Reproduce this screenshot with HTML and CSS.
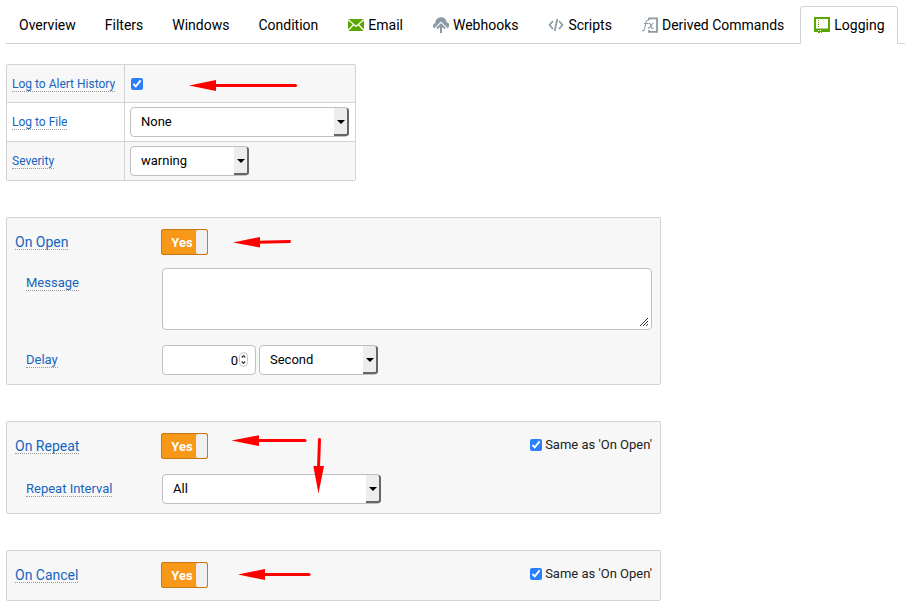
FILE: index.html
```
<!DOCTYPE html>
<html>

	<head>
		<meta charset="UTF-8">
		<title>Logging</title>
		<link rel="stylesheet" href="styles.css">
	</head>

	<body>
		<nav class="tabs">
			<a class="tab" href="#">Overview</a>
			<a class="tab" href="#">Filters</a>
			<a class="tab" href="#">Windows</a>
			<a class="tab" href="#">Condition</a>
			<a class="tab" href="#">
				<svg class="icon" width="18" height="16" viewBox="0 0 18 16"><path fill="#5aa700" d="M1 2h16v12H1z"/><path fill="none" stroke="#fff" stroke-width="1.3" d="M1 2.5l8 7 8-7M1 13.5l5.5-6M17 13.5l-5.5-6"/></svg>
				Email
			</a>
			<a class="tab" href="#">
				<svg class="icon" width="18" height="16" viewBox="0 0 18 16"><path fill="#8b9ba3" d="M2.500 11.500C.5 10.500.3 7 3.300 6 3.500 2.500 6 .3 9 .3s5.300 1.700 5.500 4.700c3 .7 3.500 4.500 1 6.500z"/><path fill="#fff" d="M9 4.500L2.500 11v2h13v-2z"/><path fill="none" stroke="#8b9ba3" stroke-width="2" d="M5 11.500L9 7.500l4 4M9 8v8"/></svg>
				Webhooks
			</a>
			<a class="tab" href="#">
				<svg class="icon" width="18" height="16" viewBox="0 0 18 16"><path fill="none" stroke="#8b9ba3" stroke-width="1.700" d="M6 4L2.500 8 6 12M12 4l3.500 4-3.500 4M10.300 2L7.700 14"/></svg>
				Scripts
			</a>
			<a class="tab" href="#">
				<svg class="icon" width="18" height="16" viewBox="0 0 18 16"><path fill="none" stroke="#8b9ba3" stroke-width="1.800" d="M8 3V1.300h8v13.500H8V13"/><path fill="none" stroke="#8b9ba3" stroke-width="1.100" d="M7.500 3.500c-1.500-.7-2.200.3-2.500 2L3.500 12c-.3 1.500-1 2-2.500 1.500M3 6.500h4M7.500 6.500c1.500-.5 2 .5 2.500 2.500s1 3 2.500 2.200M12.500 6.500c-1.500 0-2 1.200-2.700 2.500S8.500 11.500 7 11.300"/></svg>
				Derived Commands
			</a>
			<a class="tab active" href="#">
				<svg class="icon" width="18" height="16" viewBox="0 0 18 16"><path fill="#5aa700" fill-rule="evenodd" d="M1 0h16v15H9v1H8v-1H7v1H5v-1H1zM3 2v9.500h12V2z"/><path fill="none" stroke="#5aa700" stroke-width="1" stroke-dasharray="1 1" d="M5.500 3v8"/><path stroke="#fff" stroke-width="1" stroke-dasharray="1 1" d="M5 13.500h4"/></svg>
				Logging
			</a>
		</nav>

		<table class="settings">
			<tr>
				<th><label class="hint" for="history">Log to Alert History</label></th>
				<td><input type="checkbox" class="check" id="history" checked></td>
			</tr>
			<tr>
				<th><label class="hint" for="file">Log to File</label></th>
				<td><div class="select wide"><select id="file"><option>None</option></select></div></td>
			</tr>
			<tr>
				<th><label class="hint" for="severity">Severity</label></th>
				<td><div class="select"><select id="severity"><option>warning</option></select></div></td>
			</tr>
		</table>

		<section class="panel">
			<div class="row head">
				<label class="hint title" for="on_open">On Open</label>
				<label class="switch"><input type="checkbox" id="on_open" checked><span>Yes</span></label>
			</div>
			<div class="row">
				<label class="hint" for="message">Message</label>
				<textarea id="message"></textarea>
			</div>
			<div class="row">
				<label class="hint" for="delay">Delay</label>
				<div class="delay">
					<div class="number">
						<input type="number" id="delay" value="0">
						<svg class="spinner" width="9" height="15" viewBox="0 0 9 15"><rect x=".5" y=".5" width="8" height="14" rx="4" fill="#fff" stroke="#c4c4c4"/><path fill="none" stroke="#333" stroke-width="1.200" d="M2.800 5.500l1.700-1.800 1.700 1.800M2.800 9.500l1.700 1.800 1.700-1.800"/></svg>
					</div>
					<div class="select"><select aria-label="Delay unit"><option>Second</option></select></div>
				</div>
			</div>
		</section>

		<section class="panel">
			<div class="row head loose">
				<label class="hint title" for="on_repeat">On Repeat</label>
				<label class="switch"><input type="checkbox" id="on_repeat" checked><span>Yes</span></label>
				<label class="same"><input type="checkbox" class="check" checked>Same as 'On Open'</label>
			</div>
			<div class="row">
				<label class="hint" for="interval">Repeat Interval</label>
				<div class="select wide"><select id="interval"><option>All</option></select></div>
			</div>
		</section>

		<section class="panel">
			<div class="row head">
				<label class="hint title" for="on_cancel">On Cancel</label>
				<label class="switch"><input type="checkbox" id="on_cancel" checked><span>Yes</span></label>
				<label class="same"><input type="checkbox" class="check" checked>Same as 'On Open'</label>
			</div>
		</section>

		<!-- red arrows over the form -->
		<svg class="arrows" width="400" height="600" viewBox="0 0 400 600">
			<g fill="none" stroke="#f00" stroke-width="3" stroke-linecap="round">
				<path d="M215 85.500H295.500"/>
				<path d="M258 242.300L289.500 241.500"/>
				<path d="M258 440.500H305"/>
				<path d="M319.500 439.500L318.500 468"/>
				<path d="M264 574.500H309"/>
			</g>
			<g fill="#f00">
				<path d="M189 85.500L216 80V91z"/>
				<path d="M233 242.500L260 237V247.500z"/>
				<path d="M231.500 440.500L259 435.300V446z"/>
				<path d="M318.500 493.500L313.300 466H324z"/>
				<path d="M238 574.500L265 569V580z"/>
			</g>
		</svg>
	</body>

</html>
```
FILE: styles.css
```
* {
	box-sizing: border-box;
}

body {
	margin: 0;
	padding: 6px 0 7px 6px;
	background: #fff;
	color: #000;
	font: 13px/18px Roboto, "Liberation Sans", sans-serif;
}

/* tabs */
.tabs {
	display: flex;
	border-bottom: 1px solid #d0d3d3;
	margin-bottom: 20px;
	height: 38px;
}
.tab {
	display: flex;
	align-items: center;
	gap: 3px;
	height: 38px;
	margin-right: 3px;
	padding: 0 12px;
	border: 1px solid transparent;
	color: #000;
	font-size: 14px;
	text-decoration: none;
	white-space: nowrap;
}
.tab.active {
	border-color: #d0d3d3;
	border-bottom-color: #fff;
	border-radius: 4px 4px 0 0;
}
.icon {
	flex: none;
}

.hint {
	color: #1565c0;
	line-height: 14px;
	border-bottom: 1px dotted #999;
}
.check {
	flex: none;
	width: 12px;
	height: 12px;
	margin: 0;
	accent-color: #2a7fff;
}

/* top table */
.settings {
	border: 1px solid #d3d3d3;
	border-radius: 2px;
	border-spacing: 0;
	margin-bottom: 36px;
}
.settings th,
.settings td {
	height: 39px;
	padding: 0 5px;
	text-align: left;
	font-weight: normal;
	border-top: 1px solid #d3d3d3;
}
.settings th {
	min-width: 117px;
	font-size: 12px;
}
.settings td {
	padding-right: 6px;
	border-left: 1px solid #d3d3d3;
}
.settings tr:first-child > * {
	height: 37px;
	border-top: 0;
}
.settings tr:nth-child(odd) {
	background: #f7f7f7;
}
.settings .check {
	display: block;
	margin-left: 1px;
}

/* fields */
select,
textarea,
input[type=number] {
	display: block;
	width: 100%;
	height: 30px;
	margin: 0;
	padding: 0 10px;
	border: 1px solid #c0c0c0;
	border-radius: 4px;
	background: #fff;
	color: #000;
	font: inherit;
	appearance: none;
}
.select {
	position: relative;
	width: 119px;
}
.select.wide {
	width: 219px;
}
.select::before {
	content: "";
	position: absolute;
	top: 1px;
	right: 0;
	width: 13px;
	height: 26px;
	background: #ededed;
	border-right: 2px solid #666;
	border-bottom: 2px solid #666;
	border-radius: 0 3px 3px 0;
	pointer-events: none;
}
.select::after {
	content: "";
	position: absolute;
	top: 13px;
	right: 4px;
	border: 4px solid transparent;
	border-top-color: #000;
	border-bottom: 0;
	pointer-events: none;
}
textarea {
	flex: 1;
	height: 62px;
	padding: 6px 10px;
}
textarea::-webkit-resizer {
	background: url("data:image/svg+xml,%3Csvg xmlns='http://www.w3.org/2000/svg' width='8' height='8'%3E%3Cpath stroke='%23333' d='M0 8L8 0M3 8L8 3M6 8L8 6'/%3E%3C/svg%3E") no-repeat center;
}
.number {
	position: relative;
	width: 94px;
}
.number input {
	padding-right: 17px;
	text-align: right;
}
.number input::-webkit-inner-spin-button {
	display: none;
}
.spinner {
	position: absolute;
	top: 7px;
	right: 8px;
	pointer-events: none;
}
.delay {
	display: flex;
	gap: 3px;
}

/* panels */
.panel {
	max-width: 655px;
	margin: 0 0 36px;
	padding: 11px 8px 9px;
	border: 1px solid #d3d3d3;
	border-radius: 2px;
	background: #f7f7f7;
}
.panel:last-of-type {
	margin-bottom: 0;
	padding-bottom: 12px;
}
.row {
	display: grid;
	grid-template-columns: 136px 1fr;
	margin-bottom: 15px;
	padding-left: 11px;
}
.row.head {
	grid-template-columns: 146px 1fr auto;
	margin-bottom: 13px;
	padding-left: 0;
}
.row.loose {
	margin-bottom: 15px;
}
.row:last-child,
.row.head:last-child {
	margin-bottom: 0;
}
.row .hint {
	justify-self: start;
	align-self: start;
	margin-top: 8px;
}
.row .title {
	margin-top: 6px;
	font-size: 14px;
}
.switch {
	display: flex;
	width: 47px;
	height: 26px;
	border: 1px solid #c97a16;
	border-radius: 2px;
	background: #f89818;
	color: #fff;
	font-weight: bold;
	line-height: 26px;
}
.switch::after {
	content: "";
	width: 11px;
	border-radius: 2px;
	background: #f0f0f0;
}
.switch input {
	position: absolute;
	opacity: 0;
}
.switch span {
	flex: 1;
	padding-left: 6px;
	text-align: center;
}
.same {
	display: flex;
	align-items: center;
	gap: 3px;
	height: 24px;
	color: #222;
}

.arrows {
	position: absolute;
	top: 0;
	left: 0;
	pointer-events: none;
}
```
